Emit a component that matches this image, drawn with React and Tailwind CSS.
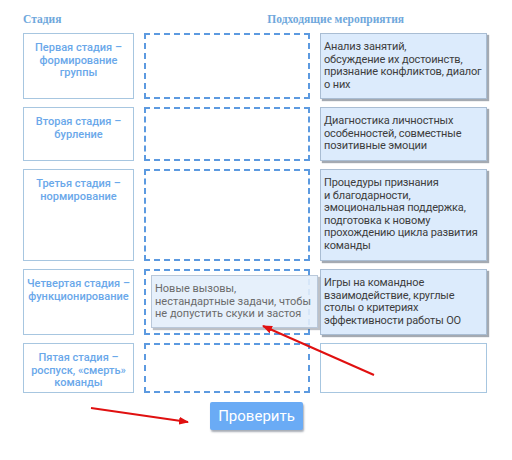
import React from "react"

const stages = [
  { title: "Первая стадия – формирование группы", h: "h-[66px]" },
  { title: "Вторая стадия – бурление", h: "h-[54px]" },
  { title: "Третья стадия – нормирование", h: "h-[92px]" },
  { title: "Четвертая стадия – функционирование", h: "h-[66px]" },
  { title: "Пятая стадия – роспуск, «смерть» команды", h: "h-[50px]" },
]

const activities = [
  "Анализ занятий,\nобсуждение их достоинств, признание конфликтов, диалог о них",
  "Диагностика личностных особенностей, совместные позитивные эмоции",
  "Процедуры признания\nи благодарности, эмоциональная поддержка, подготовка к новому прохождению цикла развития команды",
  "Игры на командное взаимодействие, круглые столы о критериях эффективности работы ОО",
  null,
]

function ActivityCard({ text }) {
  return (
    <div className="h-full w-full whitespace-pre-line border border-[#a9bdd3] bg-[#dcebfc] pl-[3px] pr-[1px] pt-[7px] text-[11px] leading-[12.6px] tracking-[-0.15px] text-[#3d3d3d] shadow-[2px_2px_1px_rgba(90,100,115,0.55)]">
      {text}
    </div>
  )
}

export default function App() {
  return (
    <div className="relative h-[460px] w-[512px] overflow-hidden bg-white font-['Roboto',sans-serif]">
      <div className="flex pl-[23px] pt-[13px] font-['Liberation_Serif',serif] text-[11.5px] font-bold leading-[12px] text-[#6fa8dc]">
        <span>Стадия</span>
        <span className="ml-[206px]">Подходящие мероприятия</span>
      </div>

      <div className="mt-[8px] flex flex-col gap-[8px] pl-[23px]">
        {stages.map((s, i) => (
          <div key={i} className={`flex gap-[10px] ${s.h}`}>
            <div className="w-[111px] shrink-0 border border-[#a7c6e0] pt-[8px] text-center text-[11px] font-medium leading-[12.5px] text-[#6aa8ea]">
              {s.title}
            </div>
            <div className="w-[166px] shrink-0 border-2 border-dashed border-[#5c9ae0]" />
            <div className="w-[167px] shrink-0">
              {activities[i] ? (
                <ActivityCard text={activities[i]} />
              ) : (
                <div className="h-full w-full border border-[#a7c6e0]" />
              )}
            </div>
          </div>
        ))}
      </div>

      <div className="mt-[9px] flex justify-center pl-[1px]">
        <button className="h-[28px] w-[93px] rounded-[2px] bg-[#6aabf5] text-[15px] text-white shadow-[1px_2px_2px_rgba(60,70,90,0.45)]">
          Проверить
        </button>
      </div>

      {/* card being dragged over the fourth slot */}
      <div className="absolute left-[151px] top-[275px] h-[53px] w-[167px] border border-[#b9c8da] bg-[#e3eefb]/90 px-[3px] pt-[7px] text-[11px] leading-[12.6px] text-[#6b6b6b] shadow-[2px_2px_1px_rgba(90,100,115,0.4)]">
        Новые вызовы, нестандартные задачи, чтобы не допустить скуки и застоя
      </div>

      <svg className="pointer-events-none absolute inset-0" width="512" height="460">
        <defs>
          <marker id="head" markerWidth="10" markerHeight="8" refX="9" refY="4" orient="auto" markerUnits="userSpaceOnUse">
            <path d="M0 0 L10 4 L0 8 Z" fill="#e01010" />
          </marker>
        </defs>
        <line x1="374" y1="375" x2="263" y2="326" stroke="#e01010" strokeWidth="2" markerEnd="url(#head)" />
        <line x1="91" y1="408" x2="188" y2="422" stroke="#e01010" strokeWidth="2" markerEnd="url(#head)" />
      </svg>
    </div>
  )
}
